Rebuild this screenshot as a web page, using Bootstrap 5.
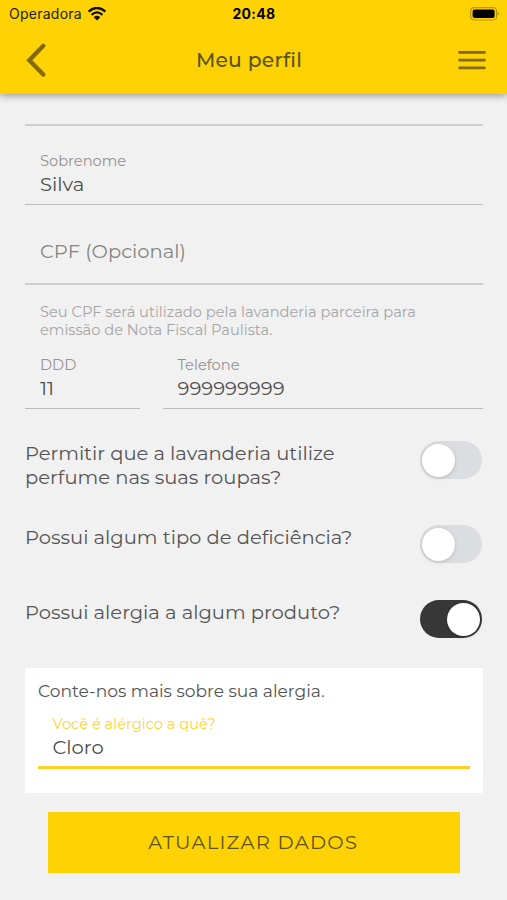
<!DOCTYPE html>
<html lang="pt-BR">
<head>
<meta charset="utf-8">
<meta name="viewport" content="width=device-width, initial-scale=1">
<title>Meu perfil</title>
<link href="https://cdn.jsdelivr.net/npm/bootstrap@5.3.0/dist/css/bootstrap.min.css" rel="stylesheet">
<style>
body{font-family:Montserrat,Inter,"Open Sans",sans-serif;background:#f1f1f1;color:#555;font-size:19.55px;line-height:24px}
.app-header{background:#ffd205;height:94px;box-shadow:0 2px 7px rgba(0,0,0,.36)}
.status-bar{font-family:Inter,sans-serif;height:28px;padding:0 8px 0 9px;color:#222;font-size:14px;line-height:28px;letter-spacing:.25px}
.status-bar .clock{font-weight:700;letter-spacing:.3px;color:#000}
.wifi{margin-left:5px}
.title-bar{height:66px;padding:0 21px 2px 25px}
.title-bar h1{font-size:20.3px;font-weight:500;letter-spacing:.22px;line-height:24px;color:#5a521c;padding-right:8px}
.app-main{padding:0 24.5px 0 25px}
.line-field{border-bottom:1px solid #bcbcbc;padding-left:15px}
.line-soft{border-bottom:2px solid #cdcdcd}
.line-field label{display:block;font-size:14.65px;line-height:18px;color:#929292}
.line-field input{display:block;width:100%;height:24px;border:0;padding:0;background:none;color:#4e4e4e;line-height:24px;outline:0;font-family:inherit}
.prev-field{height:32px}
.surname{height:79px;padding-top:26px}
.surname input{margin-top:2px}
.cpf{height:80px;padding-top:34px}
.cpf input::placeholder{color:#858585;opacity:1}
.helper{font-size:14.65px;line-height:18px;color:#a6a6a6;padding:18px 0 0 15px}
.phone-row{gap:23px;padding-top:17px}
.phone-row .line-field{height:53px}
.phone-row input{margin-top:2px}
.ddd{width:115px}
.tel{padding-left:14.5px}
.question{height:75px;padding-right:.5px}
.question.tall{height:84px;margin-top:32px}
.question.last{height:68px}
.toggle{appearance:none;width:62px;height:38px;border-radius:19px;background:#dcdde0;padding:2.5px 2px;margin:0;display:flex;flex:none}
.toggle::before{content:"";width:33px;height:33px;border-radius:50%;background:#fff;box-shadow:0 1px 4px rgba(0,0,0,.16)}
.toggle:checked{background:#373737;justify-content:flex-end}
.allergy-card{height:125px;padding:11px 13px 0;background:#fff}
.allergy-card p{font-size:17.1px;line-height:24px}
.allergy-card .line-field{height:66px;padding-top:12px;padding-left:14.5px;border-bottom:3px solid #fdcf27}
.allergy-card label{color:#fdd33f}
.allergy-card input{margin-top:2px}
.btn-update{height:61px;margin:19px 23px 0;background:#ffd205;color:#5d5414;border-radius:0;font-size:19.5px;letter-spacing:1.27px;padding:0 1px 0 0}
</style>
</head>
<body>
<header class="app-header position-relative">
  <div class="status-bar row g-0 flex-nowrap">
    <div class="col d-flex align-items-center">
      <span>Operadora</span>
      <svg class="wifi" width="20" height="15" viewBox="0 0 20 15" fill="none" stroke="#111"><path d="M1.6 4.600Q10 -2.700 18.4 4.600" stroke-width="2.4"/><path d="M4.5 7.800Q10 3 15.500 7.800" stroke-width="2.3"/><path d="M10 13.500L6.700 10.200Q10 7.400 13.300 10.200Z" fill="#111" stroke="none"/></svg>
    </div>
    <div class="col-auto clock">20:48</div>
    <div class="col d-flex align-items-center justify-content-end">
      <svg width="30" height="15" viewBox="0 0 30 15"><rect x="1.600" y=".6" width="26" height="12.400" rx="3.600" fill="none" stroke="#b69609" stroke-width="1.200"/><rect x="3.600" y="2.500" width="22" height="8.600" rx="2" fill="#000"/><path d="M28.600 4.800Q31 6.800 28.600 8.800Z" fill="#a78a08"/></svg>
    </div>
  </div>
  <div class="title-bar d-flex align-items-center justify-content-between">
    <svg width="23" height="36" viewBox="0 0 23 36" fill="none" stroke="#806a0b" stroke-width="4.300" stroke-linecap="round" stroke-linejoin="miter"><path d="M18.300 3.800L4.300 18.200L18.300 32.600"/></svg>
    <h1 class="m-0">Meu perfil</h1>
    <svg width="28" height="20" viewBox="0 0 28 20" stroke="#806a0b" stroke-width="2.700" stroke-linecap="round"><path d="M1.500 2.400H26.500M1.500 10.200H26.500M1.500 17.800H26.500"/></svg>
  </div>
</header>
<main class="app-main">
  <div class="line-field line-soft prev-field"></div>
  <div class="line-field surname"><label for="sobrenome">Sobrenome</label><input id="sobrenome" value="Silva"></div>
  <div class="line-field line-soft cpf"><input aria-label="CPF" placeholder="CPF (Opcional)"></div>
  <div class="helper">Seu CPF será utilizado pela lavanderia parceira para<br>emissão de Nota Fiscal Paulista.</div>
  <div class="phone-row d-flex">
    <div class="line-field ddd"><label for="ddd">DDD</label><input id="ddd" value="11"></div>
    <div class="line-field tel flex-fill"><label for="tel">Telefone</label><input id="tel" value="999999999"></div>
  </div>
  <div class="question tall d-flex justify-content-between align-items-start">
    <label class="form-check-label" for="q1">Permitir que a lavanderia utilize<br>perfume nas suas roupas?</label>
    <input class="toggle" type="checkbox" role="switch" id="q1">
  </div>
  <div class="question d-flex justify-content-between align-items-start">
    <label class="form-check-label pt-0" for="q2">Possui algum tipo de deficiência?</label>
    <input class="toggle" type="checkbox" role="switch" id="q2">
  </div>
  <div class="question last d-flex justify-content-between align-items-start">
    <label class="form-check-label" for="q3">Possui alergia a algum produto?</label>
    <input class="toggle" type="checkbox" role="switch" id="q3" checked>
  </div>
  <section class="allergy-card">
    <p class="m-0">Conte-nos mais sobre sua alergia.</p>
    <div class="line-field"><label for="alergia">Você é alérgico a quê?</label><input id="alergia" value="Cloro"></div>
  </section>
  <div class="d-grid"><button class="btn btn-update" type="button">ATUALIZAR DADOS</button></div>
</main>
<script src="https://cdn.jsdelivr.net/npm/bootstrap@5.3.0/dist/js/bootstrap.bundle.min.js"></script>
</body>
</html>
